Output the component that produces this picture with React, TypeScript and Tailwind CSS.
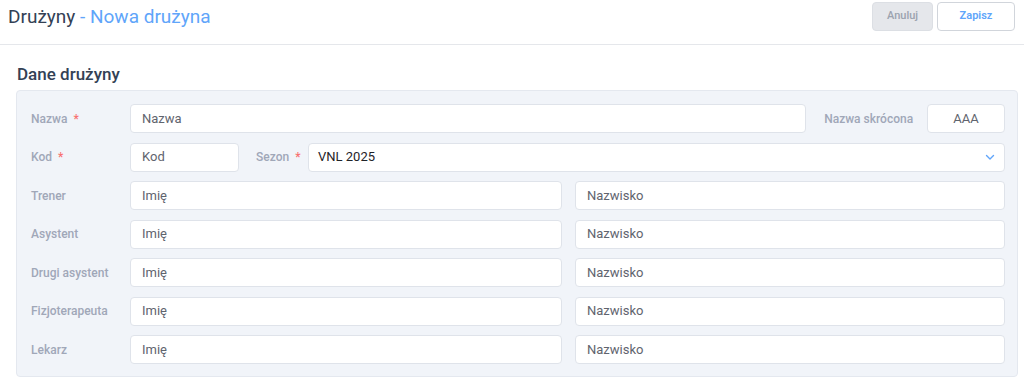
import React from "react";

const font = { fontFamily: "Roboto, 'Noto Sans', sans-serif" };

function Label({ children, req }: { children: React.ReactNode; req?: boolean }) {
  return (
    <div className="text-[12px] font-medium text-[#a0a7b8] whitespace-nowrap">
      {children}
      {req && <span className="text-[#f87171] ml-[6px]">*</span>}
    </div>
  );
}

function Input({ placeholder, className = "", center }: { placeholder: string; className?: string; center?: boolean }) {
  return (
    <div
      className={`h-[29px] bg-white border border-[#dfe3ea] rounded-[4px] flex items-center px-[11px] text-[13px] text-[#5f646e] ${center ? "justify-center" : ""} ${className}`}
    >
      {placeholder}
    </div>
  );
}

const people = ["Trener", "Asystent", "Drugi asystent", "Fizjoterapeuta", "Lekarz"];

export default function App() {
  return (
    <div className="w-[1024px] h-[386px] bg-white" style={font}>
      <div className="h-[45px] border-b border-[#e5e7eb] flex items-start justify-between pl-[8px] pr-[9px]">
        <div className="text-[19px] leading-[34px] text-[#334155]">
          Drużyny <span className="text-[#60a5fa]">- Nowa drużyna</span>
        </div>
        <div className="flex gap-[4px] pt-[2px]">
          <div className="w-[61px] h-[29px] rounded-[4px] bg-[#e5e7eb] border border-[#dcdfe4] text-[11px] font-medium text-[#9ca3af] flex items-center justify-center">
            Anuluj
          </div>
          <div className="w-[78px] h-[29px] rounded-[4px] bg-white border border-[#d1d5db] text-[11px] font-semibold text-[#60a5fa] flex items-center justify-center">
            Zapisz
          </div>
        </div>
      </div>
      <div className="pl-[16px] pr-[6px]">
        <div className="text-[17px] font-medium text-[#334155] h-[45px] pt-[17px] pl-[1px] leading-[24px]">
          Dane drużyny
        </div>
        <div className="bg-[#f1f4f9] border border-[#e4e8ef] rounded-[4px] pt-[13px] pb-[12px] pl-[14px] pr-[12px] flex flex-col gap-[9.5px]">
          <div className="flex items-center">
            <div className="w-[99px]"><Label req>Nazwa</Label></div>
            <Input placeholder="Nazwa" className="w-[677px]" />
            <div className="w-[121px] pl-[18px]"><Label>Nazwa skrócona</Label></div>
            <Input placeholder="AAA" className="w-[78px]" center />
          </div>
          <div className="flex items-center">
            <div className="w-[99px]"><Label req>Kod</Label></div>
            <Input placeholder="Kod" className="w-[109px]" />
            <div className="w-[69px] pl-[17px]"><Label req>Sezon</Label></div>
            <div className="flex-1 h-[29px] bg-white border border-[#dfe3ea] rounded-[4px] flex items-center justify-between pl-[9px] pr-[8px] text-[13px] text-[#1f2328]">
              VNL 2025
              <svg width="12" height="12" viewBox="0 0 12 12" fill="none">
                <path d="M2.5 4.5 L6 8 L9.5 4.5" stroke="#60a5fa" strokeWidth="1.4" strokeLinecap="round" strokeLinejoin="round" />
              </svg>
            </div>
          </div>
          {people.map((p) => (
            <div key={p} className="flex items-center">
              <div className="w-[99px]"><Label>{p}</Label></div>
              <Input placeholder="Imię" className="w-[432px]" />
              <div className="w-[13px]" />
              <Input placeholder="Nazwisko" className="flex-1" />
            </div>
          ))}
        </div>
      </div>
    </div>
  );
}
